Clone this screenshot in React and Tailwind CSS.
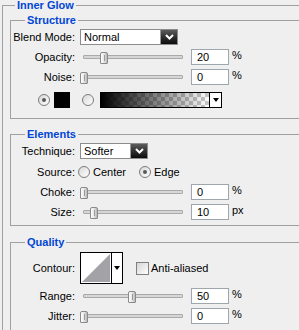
import React from 'react';

const Group = ({ title, spacer = 'w-[14px]', className = '', children }) => (
    <div className={`border-l border-t border-[#a0a0a0] ${className}`}>
        {/* legend sits over the top rule */}
        <div className="-mt-[6px] flex h-[11px] items-center">
            <div className={spacer} />
            <span className="bg-[#efefef] px-[2px] text-[11px] font-bold leading-[11px] text-[#0046d5]">{title}</span>
        </div>
        {children}
    </div>
);

const Label = ({ children }) => (
    <span className="mr-[5px] w-[64px] shrink-0 text-right">{children}</span>
);

const Thumb = ({ pos }) => (
    <div
        className="absolute top-[3px] h-[12px] w-[8px] rounded-t-[2px] rounded-b-[1px] border border-[#8a8a8a] bg-gradient-to-r from-[#ffffff] via-[#e6e6e6] to-[#b9b9b9]"
        style={{ left: pos }}
    >
        <div className="mx-auto mt-[2px] h-[6px] w-px bg-[#9c9c9c]" />
    </div>
);

const Slider = ({ pos }) => (
    <div className="relative flex h-[16px] w-[108px] shrink-0 items-center pl-[3px] pr-[5px]">
        <div className="h-[4px] w-full rounded-[1px] border border-[#a9a9a9] bg-[#d6d6d6]" />
        <Thumb pos={pos} />
    </div>
);

const NumBox = ({ value, unit }) => (
    <>
        <div className="ml-[3px] flex h-[16px] w-[38px] shrink-0 items-center border border-[#9ea6ae] bg-white pl-[5px] leading-[14px]">
            {value}
        </div>
        <span className="ml-[3px] self-start text-[11px] leading-[13px]">{unit}</span>
    </>
);

const SliderRow = ({ label, pos, value, unit = '%', className = 'mt-[4px]' }) => (
    <div className={`flex h-[16px] items-center ${className}`}>
        <Label>{label}</Label>
        <Slider pos={pos} />
        <NumBox value={value} unit={unit} />
    </div>
);

const Chevron = () => (
    <svg width="9" height="6" viewBox="0 0 9 6">
        <polyline points="1,1 4.5,4.5 8,1" fill="none" stroke="#fff" strokeWidth="2" />
    </svg>
);

const Select = ({ value, width }) => (
    <div className={`flex h-[16px] shrink-0 border border-[#8c8c8c] bg-white ${width}`}>
        <span className="flex-1 pl-[3px] leading-[14px]">{value}</span>
        <div className="flex w-[17px] items-center justify-center border-l border-[#9a9a9a] bg-gradient-to-b from-[#5c5c5c] to-[#0c0c0c]">
            <Chevron />
        </div>
    </div>
);

const Radio = ({ checked }) => (
    <div className="flex h-[12px] w-[12px] shrink-0 items-center justify-center rounded-full border border-[#7c7c7c] bg-gradient-to-br from-[#d8d8d8] to-[#ffffff]">
        {checked && <div className="h-[4px] w-[4px] rounded-full bg-[#5a5a5a]" />}
    </div>
);

const DownArrow = () => (
    <svg width="6" height="4" viewBox="0 0 6 4">
        <polygon points="0,0 6,0 3,4" fill="#000" />
    </svg>
);

const GradientStrip = () => (
    <svg width="108" height="14" viewBox="0 0 108 14">
        <defs>
            <pattern id="chk" width="8" height="8" patternUnits="userSpaceOnUse">
                <rect width="8" height="8" fill="#fff" />
                <rect width="4" height="4" fill="#c8c8c8" />
                <rect x="4" y="4" width="4" height="4" fill="#c8c8c8" />
            </pattern>
            <linearGradient id="fade" x1="0" x2="1" y1="0" y2="0">
                <stop offset="0" stopColor="#000" stopOpacity="1" />
                <stop offset="1" stopColor="#000" stopOpacity="0" />
            </linearGradient>
        </defs>
        <rect width="108" height="14" fill="url(#chk)" />
        <rect width="108" height="14" fill="url(#fade)" />
    </svg>
);

const ContourThumb = () => (
    <svg width="30" height="30" viewBox="0 0 30 30">
        <rect width="30" height="30" fill="#fff" />
        <polygon points="1,29 29,1 29,29" fill="#a3a3a7" />
    </svg>
);

export default function App() {
    return (
        <div className="h-[330px] w-[299px] overflow-hidden bg-[#efefef] font-['Liberation_Sans',Arial,sans-serif] text-[11px] leading-[13px] text-black">
            <Group title="Inner Glow" spacer="w-[12px]" className="ml-[2px] mt-[5px] h-[330px]">

                {/* Structure */}
                <Group title="Structure" className="ml-[7px] mt-[9px] border-b pb-[10px]">
                    <div className="mt-[3px] flex h-[16px] items-center">
                        <Label>Blend Mode:</Label>
                        <Select value="Normal" width="w-[98px]" />
                    </div>
                    <SliderRow label="Opacity:" pos={20} value="20" />
                    <SliderRow label="Noise:" pos={0} value="0" />
                    <div className="mt-[7px] flex h-[16px] items-center pl-[27px]">
                        <Radio checked />
                        <div className="ml-[4px] h-[16px] w-[16px] bg-black" />
                        <div className="ml-[12px]"><Radio /></div>
                        <div className="ml-[6px] flex h-[16px] w-[122px] border border-black bg-white">
                            <GradientStrip />
                            <div className="flex flex-1 items-center justify-center border-l border-black">
                                <DownArrow />
                            </div>
                        </div>
                    </div>
                </Group>

                {/* Elements */}
                <Group title="Elements" className="ml-[7px] mt-[15px] border-b pb-[5px]">
                    <div className="mt-[3px] flex h-[16px] items-center">
                        <Label>Technique:</Label>
                        <Select value="Softer" width="w-[68px]" />
                    </div>
                    <div className="mt-[5px] flex h-[16px] items-center">
                        <span className="mr-[3px] w-[64px] shrink-0 text-right">Source:</span>
                        <div className="flex w-[61px] items-center">
                            <Radio />
                            <span className="ml-[3px]">Center</span>
                        </div>
                        <Radio checked />
                        <span className="ml-[3px]">Edge</span>
                    </div>
                    <SliderRow label="Choke:" pos={0} value="0" />
                    <SliderRow label="Size:" pos={10} value="10" unit="px" />
                </Group>

                {/* Quality */}
                <Group title="Quality" className="ml-[7px] mt-[16px] h-[120px]">
                    <div className="mt-[4px] flex h-[32px] items-center">
                        <Label>Contour:</Label>
                        <div className="flex h-[32px] w-[43px] shrink-0 border border-black bg-white">
                            <ContourThumb />
                            <div className="flex flex-1 items-center justify-center border-l border-black">
                                <DownArrow />
                            </div>
                        </div>
                        <div className="ml-[13px] h-[13px] w-[13px] shrink-0 border border-[#808080] bg-gradient-to-br from-[#d6d6d6] to-[#ffffff]" />
                        <span className="ml-[2px]">Anti-aliased</span>
                    </div>
                    <SliderRow label="Range:" pos={48} value="50" />
                    <SliderRow label="Jitter:" pos={0} value="0" />
                </Group>
            </Group>
        </div>
    );
}
